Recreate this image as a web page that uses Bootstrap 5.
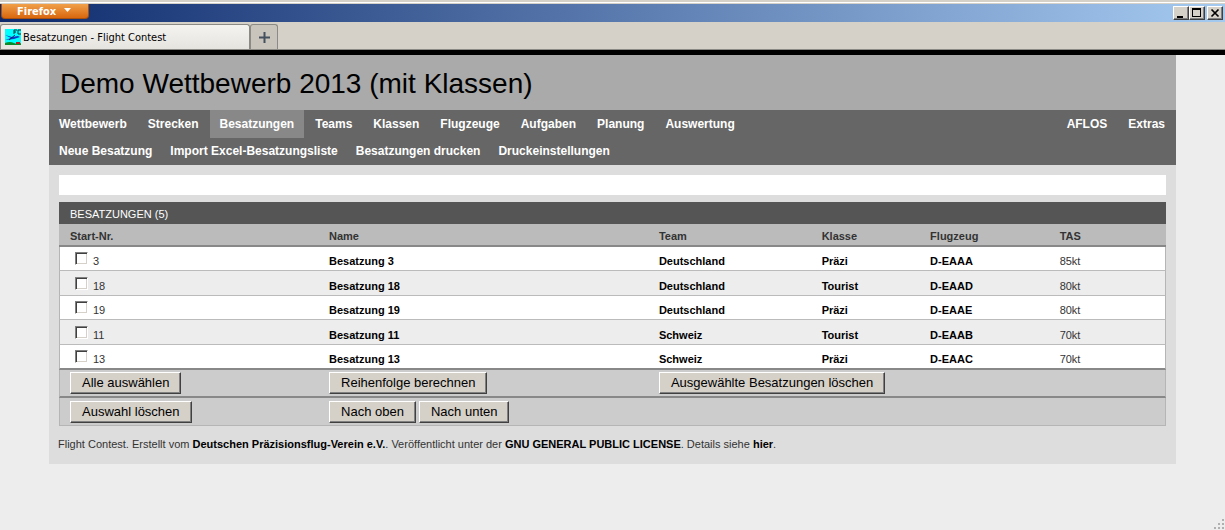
<!DOCTYPE html>
<html lang="de">
<head>
<meta charset="utf-8">
<meta name="viewport" content="width=device-width, initial-scale=1">
<title>Besatzungen - Flight Contest</title>
<link href="https://cdn.jsdelivr.net/npm/bootstrap@5.3.0/dist/css/bootstrap.min.css" rel="stylesheet">
<style>
body { background: #ededed; color: #333; font: 11px/14px "Liberation Sans", Arial, sans-serif; }
a { color: #000; font-weight: bold; text-decoration: none; }

/* Browser window */
.chrome { font-family: "DejaVu Sans Condensed", "DejaVu Sans", sans-serif; background: #d5d0c8; border-bottom: 5px solid #000; }
.titlebar { height: 22px; padding-top: 4px; background: linear-gradient(#d5d0c8 0 2px, #fff 2px 3px, #d5d0c8 3px 4px, transparent 4px), linear-gradient(90deg, #0e2a6c, #a5caf0); }
.fx-menu { width: 88px; height: 15px; margin-left: 1px; padding: 0 0 0 15px; border: 1px solid #a8500d; border-top: 0; border-radius: 0 0 4px 4px; background: linear-gradient(#f0a04a, #d9670e); color: #fff; font-weight: bold; font-size: 11px; line-height: 16px; }
.win-set { padding: 2px 2px 0 0; }
.win-btn { width: 16px; height: 14px; padding: 0; background: #d5d0c8; border: 1px solid; border-color: #fff #404040 #404040 #fff; box-shadow: inset -1px -1px #808080; }
.win-close { margin-left: 2px; }
.win-btn svg, .fx-menu svg, .tab-page svg, .tab-new svg { display: block; }
.tabstrip { height: 28px; padding-top: 2px; border-bottom: 1px solid #8c8a84; }
.tab-page { width: 250px; padding-left: 4px; border: 1px solid #8c8a84; border-bottom: 0; border-radius: 3px 3px 0 0; background: linear-gradient(#f4f3f0, #e6e4df); color: #000; }
.tab-label { padding: 2px 0 0 2px; }
.tab-new { width: 28px; padding: 0; border: 1px solid #8c8a84; border-bottom: 0; border-radius: 3px 3px 0 0; background: #c9c5bc; }

/* Page */
.sheet { width: 92%; background: #ddd; }
.sheet-title { margin: 0; padding: 12px 11px 9px; background: #aaa; color: #000; font-size: 28px; line-height: 34px; font-weight: normal; }
.menus { background: #666; }
.menus a { padding: 7px 10px 6px; margin-right: 1px; color: #fff; font-size: 12px; line-height: 15px; white-space: nowrap; }
.menus .sub { padding: 0 10px; gap: 18px; }
.menus .sub a { padding: 6px 0; margin: 0; }
.menus a.current { background: #888; }
.sheet-body { padding: 10px 10px 13px; }
.notice { height: 20px; margin-bottom: 7px; background: #fff; }
.crews { width: 100%; table-layout: fixed; border-collapse: separate; border-spacing: 0; color: #333; }
.crews th, .crews td { padding: 0 11px; white-space: nowrap; }
.crews td:first-child { padding-left: 10px; border-left: 1px solid #b5b5b5; }
.crews td:last-child { border-right: 1px solid #b5b5b5; }
.crews .cap th { height: 22px; padding-top: 2px; background: #555; color: #fff; font-weight: normal; }
.crews .heads th { height: 23px; padding-top: 3px; background: #bbb; border-bottom: 2px solid #888; }
.crews tbody td { height: 25px; padding-top: 5px; background: #fff; border-bottom: 1px solid #bbb; }
.crews tbody tr:nth-child(even) td { background: #ededed; }
.crews tbody tr:nth-child(odd) td { height: 24px; }
.crews tbody td:first-child { padding-top: 0; }
.crews tbody tr:last-child td { height: 25px; border-bottom: 2px solid #888; }
.crews tfoot td { height: 28px; background: #ccc; }
.crews tfoot tr:first-child td { border-bottom: 2px solid #888; }
.crews tfoot tr:last-child td { border-bottom: 1px solid #b5b5b5; }
.crew-tick { padding-top: 3px; }
.tick { appearance: none; flex: none; width: 13px; height: 13px; margin: 0 5px 3px 5px; background: #fff; border: 1px solid; border-color: #808080 #fff #fff #808080; box-shadow: inset 1px 1px #404040, inset -1px -1px #d5d0c8; }
.tick:checked { background: #333; }
.push { height: 22px; padding: 0 11px; background: #d5d0c8; border: 1px solid; border-color: #fff #404040 #404040 #fff; box-shadow: inset -1px -1px #808080; color: #000; font-size: 13px; line-height: 18px; white-space: nowrap; }
.credits { margin: 11px 0 0 -1px; }
.grip { right: 1px; bottom: 1px; }
</style>
</head>
<body>
<header class="chrome">
  <div class="titlebar d-flex justify-content-between">
    <button type="button" class="fx-menu d-flex align-items-start">Firefox<svg class="ms-2 mt-1" width="8" height="5" aria-hidden="true"><path d="M0 0h7L3.500 4z" fill="#fff"/></svg></button>
    <div class="win-set d-flex">
      <button type="button" class="win-btn" aria-label="Minimieren"><svg width="13" height="12" aria-hidden="true"><path d="M3 9h6v2H3z"/></svg></button>
      <button type="button" class="win-btn" aria-label="Maximieren"><svg width="13" height="12" aria-hidden="true"><path d="M2 1h9v9H2zM3 3v6h7V3z" fill-rule="evenodd"/></svg></button>
      <button type="button" class="win-btn win-close" aria-label="Schließen"><svg width="13" height="12" aria-hidden="true"><path d="M3.500 2.500l7 7m0-7l-7 7" stroke="#000" stroke-width="1.700"/></svg></button>
    </div>
  </div>
  <div class="tabstrip d-flex">
    <div class="tab-page d-flex align-items-center">
      <svg width="16" height="16" viewBox="0 0 16 16" aria-hidden="true"><path fill="#0ff" d="M0 0h16v16H0z"/><path d="M9 5V1h3M9 3h2M16 1h-3v4h3" stroke="#033" fill="none"/><path d="M0 6l7 2 6-1 2 1-6 2-9 1 6-2z" fill="#1238c8"/><path d="M4 11l6-5" stroke="#126" /><path d="M0 14q5-2 9 0t7 0v2H0z" fill="#0b8a2c"/><path d="M11 13h4v2h-4z" fill="#b02020"/></svg>
      <span class="tab-label">Besatzungen - Flight Contest</span>
    </div>
    <button type="button" class="tab-new d-flex align-items-center justify-content-center" aria-label="Neuer Tab"><svg width="11" height="11" aria-hidden="true"><path d="M5.500 0v11M0 5.500h11" stroke="#45505e" stroke-width="2"/></svg></button>
  </div>
</header>

<main class="sheet mx-auto">
  <h1 class="sheet-title">Demo Wettbewerb 2013 (mit Klassen)</h1>
  <div class="menus">
    <nav class="d-flex" aria-label="Hauptmenü">
      <a href="#">Wettbewerb</a><a href="#">Strecken</a><a href="#" class="current" aria-current="page">Besatzungen</a><a href="#">Teams</a><a href="#">Klassen</a><a href="#">Flugzeuge</a><a href="#">Aufgaben</a><a href="#">Planung</a><a href="#">Auswertung</a>
      <a href="#" class="ms-auto">AFLOS</a><a href="#">Extras</a>
    </nav>
    <nav class="d-flex sub" aria-label="Besatzungen">
      <a href="#">Neue Besatzung</a><a href="#">Import Excel-Besatzungsliste</a><a href="#">Besatzungen drucken</a><a href="#">Druckeinstellungen</a>
    </nav>
  </div>
  <div class="sheet-body">
    <div class="notice" role="status"></div>
    <table class="crews">
      <colgroup><col style="width:23.4%"><col style="width:29.8%"><col style="width:14.7%"><col style="width:9.8%"><col style="width:11.7%"><col></colgroup>
      <thead>
        <tr class="cap"><th colspan="6">BESATZUNGEN (5)</th></tr>
        <tr class="heads"><th>Start-Nr.</th><th>Name</th><th>Team</th><th>Klasse</th><th>Flugzeug</th><th>TAS</th></tr>
      </thead>
      <tbody>
        <tr><td><label class="crew-tick d-flex align-items-end"><input type="checkbox" class="tick">3</label></td><td><a href="#">Besatzung 3</a></td><td><a href="#">Deutschland</a></td><td><a href="#">Präzi</a></td><td><a href="#">D-EAAA</a></td><td>85kt</td></tr>
        <tr><td><label class="crew-tick d-flex align-items-end"><input type="checkbox" class="tick">18</label></td><td><a href="#">Besatzung 18</a></td><td><a href="#">Deutschland</a></td><td><a href="#">Tourist</a></td><td><a href="#">D-EAAD</a></td><td>80kt</td></tr>
        <tr><td><label class="crew-tick d-flex align-items-end"><input type="checkbox" class="tick">19</label></td><td><a href="#">Besatzung 19</a></td><td><a href="#">Deutschland</a></td><td><a href="#">Präzi</a></td><td><a href="#">D-EAAE</a></td><td>80kt</td></tr>
        <tr><td><label class="crew-tick d-flex align-items-end"><input type="checkbox" class="tick">11</label></td><td><a href="#">Besatzung 11</a></td><td><a href="#">Schweiz</a></td><td><a href="#">Tourist</a></td><td><a href="#">D-EAAB</a></td><td>70kt</td></tr>
        <tr><td><label class="crew-tick d-flex align-items-end"><input type="checkbox" class="tick">13</label></td><td><a href="#">Besatzung 13</a></td><td><a href="#">Schweiz</a></td><td><a href="#">Präzi</a></td><td><a href="#">D-EAAC</a></td><td>70kt</td></tr>
      </tbody>
      <tfoot>
        <tr><td><button type="button" class="push">Alle auswählen</button></td><td><button type="button" class="push">Reihenfolge berechnen</button></td><td colspan="4"><button type="button" class="push">Ausgewählte Besatzungen löschen</button></td></tr>
        <tr><td><button type="button" class="push">Auswahl löschen</button></td><td colspan="5"><button type="button" class="push">Nach oben</button> <button type="button" class="push">Nach unten</button></td></tr>
      </tfoot>
    </table>
    <p class="credits">Flight Contest. Erstellt vom <a href="#">Deutschen Präzisionsflug-Verein e.V.</a>. Veröffentlicht unter der <a href="#">GNU GENERAL PUBLIC LICENSE</a>. Details siehe <a href="#">hier</a>.</p>
  </div>
</main>
<svg class="grip position-fixed" width="11" height="11" fill="#b0b0b0" aria-hidden="true"><path d="M9 1h2v2H9zM5 5h2v2H5zM9 5h2v2H9zM1 9h2v2H1zM5 9h2v2H5zM9 9h2v2H9z"/></svg>
<script src="https://cdn.jsdelivr.net/npm/bootstrap@5.3.0/dist/js/bootstrap.bundle.min.js"></script>
</body>
</html>
